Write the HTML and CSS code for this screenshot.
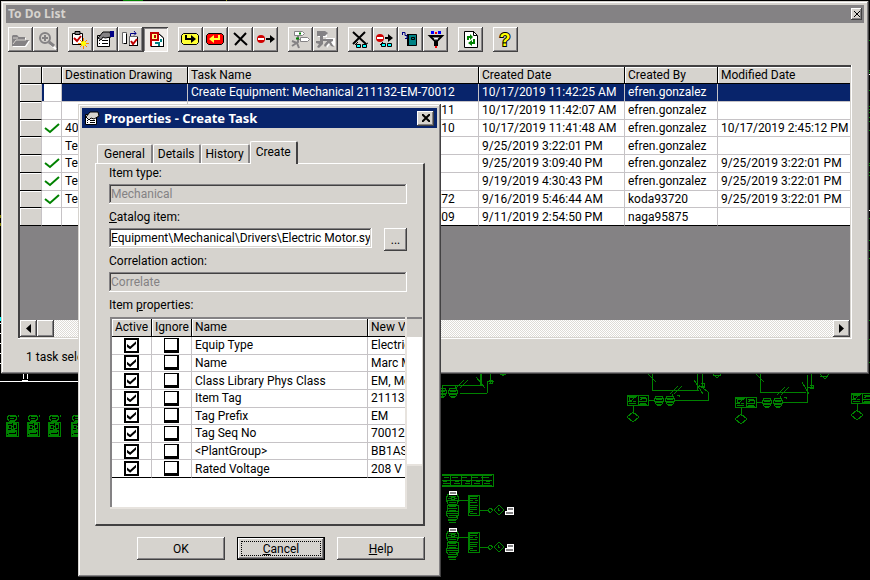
FILE: index.html
```html
<!DOCTYPE html>
<html lang="en">
<head>
<meta charset="utf-8">
<title>To Do List</title>
<link rel="stylesheet" href="styles.css">
</head>
<body>
<main class="desktop">
<svg class="drawing" viewBox="0 0 870 580" aria-hidden="true">
  <defs>
    <g id="pump"><path d="M3 1h6l2 3-2 3H3L1 4zM4 4h4M4 2h5M4 6h5M0 8h12v14H0zM1 9h4M7 9h4M2 11h3v3H2zM7 10h3v4H7zM5 12h2M5 15h4M1 16h10M2 17h8v3H2zM3 18h6M1 21h10M12 3l1-2M5 7v3M1 10v10"/></g>
    <g id="pair"><path d="M0 0h21v10H0zM11 0v10M2 2h7M2 5h3l2-2M6 6h3M2 8h7M13 2h6M13 5l3-2h3M13 8h6M1 6h4M12 6h8M1 1h9M12 9h8M2 3v4M19 3v4M6 10v9M6 17l6 5-6 5-6-5z"/></g>
    <g id="duo"><path d="M2 0h6l2 4-2 4H2L0 4zM2 3h6M2 6h6M1 2h8M1 5h8M3 9h4M13 0h6l2 4-2 4h-6l-2-4zM13 3h6M13 6h6M12 2h8M12 5h8M14 9h4M18-2v3"/></g>
    <g id="branch">
      <path d="M-6 9h4M5 3h9l2 5-2 5H5L3 8zM6 5h7M5 7h3M11 7h3M8 6h3v2H8zM4 9h11M6 11h7M4 14h11v6H4zM6 15h7M5 17h9M6 19h7M4 20l-1 3 2 3h9l2-3-1-3M4 22h11M6 24h7v2H6M5 28h9l1-3M5 29h8M6 31h7M16 9h9M25 4h11v20H25zM26 5h9M27 7h7M27 9h3M32 9h3M27 11h7M26 14h9M27 16h7M27 18h7M27 20h3M27 22h7M26 6v16M36 19h9M47 17l3 2-3 3-2-3zM51 19l5-5 5 5-5 5zM55 17v2h2"/>
      <path class="drawing-note" d="M6 0h7v3H6zM64 16h6v3h-6zM62 20h8v3h-8z"/>
    </g>
  </defs>
  <g class="drawing-lines">
    <path d="M102 1h16M123 0h20M158 1h9M178 1h15M202 1h8M220 1h7M298 1h18M408 1h20"/>
    <use href="#pump" x="6" y="414"/><use href="#pump" x="27" y="414"/><use href="#pump" x="48" y="414"/><use href="#pump" x="71" y="414"/>
    <path d="M442 385h39v-12M480 373v12M487 393V381M460 393h27M442 386v10M456 388l8-8M460 388l8-8M476 377l9 11M488 381h6M490 374v10M489 380h3v3h-3M500 374h6M500 373l3 3 3-3"/>
    <use href="#duo" x="437" y="388"/>
    <use href="#pair" x="627" y="395"/><path d="M648 400h7M674 400h34v-8l-9-7M652 373v17h47M697 373v17M702 373v15M648 374l8 8M670 394l8-8M674 394l8-8M694 380l9 14M699 386h5M701 383h3v4h-3M713 375h8M713 374l4 4 4-4M677 395h2v2"/>
    <use href="#duo" x="654" y="396"/>
    <use href="#pair" x="735" y="397"/><path d="M756 402h7M783 402h24v-27M760 373v19h46M811 373v15M756 374l8 8M777 395l8-8M781 395l8-8M802 382l7 12M808 387h6M810 385h3v3h-3M820 376h8M820 374l5 5 4-5M784 397h2v2"/>
    <use href="#duo" x="762" y="398"/>
    <use href="#pair" x="851" y="393"/>
    <path d="M442 474h51v12h-51M442 480h50M442 475h50M442 485h50M444 477h5M452 477h6M462 477h5M471 477h7M481 477h8M443 483h7M454 483h6M465 483h5M474 483h6M484 483h6M443 481h4M455 481h4M466 481h4M476 481h4M486 481h4M450 475v11M461 475v11M471 475v11M482 475v11"/>
    <use href="#branch" x="443" y="491"/><use href="#branch" x="443" y="528"/>
    <path d="M868 40h2M868 70h2M868 72h2M868 90h2M868 106h2M868 109h2M868 112h2M868 117h2M868 121h2M868 130h2M868 163h2M868 165h2M868 172h2M868 175h2M868 218h2M868 240h2M868 250h2M868 258h2M868 320h2M868 339h2M868 362h2"/>
  </g>
  <path class="drawing-frame" d="M0 381h79M23 373v6M27 373v6M22 380h6M0 323h2M0 333h2M0 343h2M0 353h2M0 363h2M868 74h2M868 210h2"/>
  <path class="drawing-cyan" d="M0 319h2"/><path class="drawing-yellow" d="M0 216h2M0 224h2M226 1h1"/>
  <path class="drawing-red" d="M160 1h34M206 1h7"/>
</svg>

<section class="window todo" aria-label="To Do List">
  <header class="titlebar titlebar-inactive">
    <h1 class="title">To Do List</h1>
    <button class="close close-small" aria-label="Close"><svg viewBox="0 0 8 8"><path d="M1 1l6 6M7 1L1 7"/></svg></button>
  </header>
  <nav class="toolbar" aria-label="Tasks">
    <div class="tool-group">
      <button class="tool" aria-label="Open"><svg viewBox="0 0 25 25"><path fill="#fff" d="M5 9h5l2 2h6v3h4l-4 6H5z"/><path fill="#848284" d="M4 9l1-1h4l2 2h6v3h4l-4 6H4z"/><path stroke="#d6d3ce" fill="none" d="M5 17l3-4h10M5 11h5"/></svg></button>
      <button class="tool" aria-label="Find"><svg viewBox="0 0 25 25" fill="none"><path stroke="#fff" stroke-width="2" d="M17 17l6 5"/><circle cx="12" cy="11" r="5" stroke="#848284" stroke-width="2"/><path stroke="#848284" stroke-width="2" d="M9 11h6M12 8v6"/><path stroke="#848284" stroke-width="3" d="M16 15l5 4"/></svg></button>
    </div>
    <div class="tool-group">
      <button class="tool" aria-label="New task"><svg viewBox="0 0 25 25"><path fill="#fff" stroke="#000" d="M4.500 6.500h10v11h-10z"/><path fill="#848284" stroke="#000" d="M7 4.500h5v3H7z"/><path fill="none" stroke="#c00000" stroke-width="2" d="M6 11l3 3 4-5"/><path stroke="#ff8200" stroke-width="1" d="M15.500 11v11M10 16.500h11M12 13l7 7M19 13l-7 7"/><circle cx="15.500" cy="16.500" r="2.500" fill="#ff0"/></svg></button>
      <button class="tool" aria-label="Properties"><svg viewBox="0 0 25 25"><path fill="#fff" stroke="#000" d="M4.500 8.500h12v11h-12z"/><path fill="#848284" stroke="#000" d="M5 11l5-6h7l1 5-6 1-2-1-2 3z"/><path fill="#000084" d="M17 4h4v6h-4z"/><path stroke="#000" d="M6 13.500h1M9 13.500h6M6 16.500h1M9 16.500h6"/></svg></button>
      <button class="tool" aria-label="Update"><svg viewBox="0 0 25 25"><path fill="#fff" stroke="#666" d="M4.500 5.500h4v11h-4zM11.500 9.500h8v9h-8z"/><path fill="#000" d="M8 7h1v10H6v-1h2zM19 10h1v9h-9v-1h8z"/><path fill="none" stroke="#000084" d="M12.500 9V6.500H18M16 4l2 2.500-2 2"/><path fill="none" stroke="#c00000" stroke-width="2" d="M13 14l2 3 4-5"/></svg></button>
      <button class="tool tool-pressed" aria-label="Show drawing" aria-pressed="true"><svg viewBox="0 0 25 25"><path fill="#fff" stroke="#666" d="M7.500 6.500h8l5 4v9h-13z"/><path fill="#ff8" stroke="#c00000" stroke-width="2" d="M8 6h7v7H8z"/><path fill="#c00000" d="M11 8h2v3h-2zM7 13h2v6H7z"/><path fill="none" stroke="#008284" stroke-width="2" d="M12 16h4v3M18 12v3"/><path stroke="#000" fill="none" d="M16 7l4.500 4V19M8 19.500h13"/></svg></button>
    </div>
    <div class="tool-group">
      <button class="tool" aria-label="Retrieve"><svg viewBox="0 0 25 25"><path fill="#ff3" stroke="#000" d="M5.500 6.500h13l2 2v7l-2 2h-13l-2-2v-7z"/><path fill="none" stroke="#000" stroke-width="2" d="M8 8v4h7"/><path d="M13 8l5 4-5 4z"/></svg></button>
      <button class="tool" aria-label="Return"><svg viewBox="0 0 25 25"><path fill="#f00" stroke="#000" d="M5.500 6.500h13l2 2v7l-2 2h-13l-2-2v-7z"/><path fill="none" stroke="#ff3" stroke-width="2" d="M16 8v4H9"/><path fill="#ff3" d="M11 8l-5 4 5 4z"/></svg></button>
      <button class="tool" aria-label="Delete"><svg viewBox="0 0 25 25"><path stroke="#000" stroke-width="2" d="M6 6l13 12M18 6L7 18"/></svg></button>
      <button class="tool" aria-label="Defer"><svg viewBox="0 0 25 25"><circle cx="8" cy="12" r="4" fill="#d00000"/><path stroke="#fff" stroke-width="2" d="M5 12h6"/><path stroke="#000" stroke-width="2" d="M13 12h6"/><path d="M17 8l5 4-5 4z"/></svg></button>
    </div>
    <div class="tool-group">
      <button class="tool" aria-label="Show path"><svg viewBox="0 0 25 25" fill="none"><path fill="#fff" stroke="#848284" d="M6.500 4.500h8l2 2-2 2h-8zM12.500 10.500h7l2 2-2 2h-7z"/><path stroke="#848284" stroke-width="2" d="M10 9v6l-6 4M4 14l5 2 2 5"/><path stroke="#848284" d="M10 12.500h3"/><path stroke="#008200" stroke-width="2" d="M11 6.500h2M8 11.500h3"/></svg></button>
      <button class="tool" aria-label="Remove path"><svg viewBox="0 0 25 25"><path fill="#fff" d="M5 5h9v5H5zM13 11h9v8l-5-2-3 4z"/><path fill="#848284" d="M4 4h8l3 2-3 3h-2v3h10v2l-2 1 3 5-3-1-2-3-4 4-1-2 3-4h-4v3l-4 4-2-1 2-3-3-1v-2h4V9H4z"/></svg></button>
    </div>
    <div class="tool-group">
      <button class="tool" aria-label="Preview delete"><svg viewBox="0 0 25 25"><path stroke="#000" stroke-width="2" d="M5 5l13 12M17 5L5 17"/><path fill="#0ff" stroke="#000" d="M8.500 17.500h4v3h-4zM14.500 17.500h4v3h-4z"/><path stroke="#000" d="M7 18l3-3M18 17l2-1"/></svg></button>
      <button class="tool" aria-label="Preview defer"><svg viewBox="0 0 25 25"><circle cx="7" cy="11" r="4" fill="#d00000"/><path stroke="#fff" stroke-width="2" d="M4 11h6"/><path stroke="#000" stroke-width="2" d="M12 11h5"/><path d="M15 7l5 4-5 4z"/><path fill="#0ff" stroke="#000" d="M8.500 16.500h4v3h-4zM14.500 16.500h4v3h-4z"/><path stroke="#000" d="M7 18l3-3"/></svg></button>
      <button class="tool" aria-label="Log"><svg viewBox="0 0 25 25"><path fill="#008284" stroke="#000" d="M9.500 7.500h9v11h-9z"/><path fill="#000" d="M9 7h2v12H9z"/><path fill="none" stroke="#000" d="M13.500 10.500h3v2h-3z"/><path fill="none" stroke="#000084" d="M4 5.500h3v3h2v3H7M4.500 5v3"/></svg></button>
      <button class="tool" aria-label="Filter"><svg viewBox="0 0 25 25"><path fill="#fff" stroke="#000" stroke-width="2" d="M7 9h12l-5 5v4h-2v-4z"/><path stroke="#848284" d="M10 10.500h6M11 12.500h4"/><path fill="#00f" d="M8 4h3v3H8zM15 4h3v3h-3z"/><path fill="#f00" d="M12 5h2v2h-2zM12 19h2v2h-2z"/></svg></button>
    </div>
    <div class="tool-group">
      <button class="tool" aria-label="Refresh"><svg viewBox="0 0 25 25"><path fill="#fff" stroke="#000" d="M6.500 4.500h9l4 4v12h-13z"/><path fill="none" stroke="#000" d="M15.500 4v4.500H19"/><path fill="none" stroke="#008200" stroke-width="2" d="M10 13v-3h3M16 12v4h-3"/><path fill="#008200" d="M12 7l3 3-3 3zM14 13l-4 3 4 3z"/></svg></button>
    </div>
    <div class="tool-group">
      <button class="tool" aria-label="Help"><svg viewBox="0 0 25 25"><text class="help-mark" x="12" y="19" text-anchor="middle">?</text></svg></button>
    </div>
  </nav>

  <div class="task-view">
    <table class="tasks">
      <colgroup><col class="c-row"><col class="c-state"><col class="c-dest"><col class="c-name"><col class="c-created"><col class="c-by"><col></colgroup>
      <thead><tr><th></th><th></th><th>Destination Drawing</th><th>Task Name</th><th>Created Date</th><th>Created By</th><th>Modified Date</th></tr></thead>
      <tbody>
        <tr class="selected"><th></th><td class="state"></td><td></td><td>Create Equipment: Mechanical 211132-EM-70012</td><td>10/17/2019 11:42:25 AM</td><td>efren.gonzalez</td><td></td></tr>
        <tr><th></th><td></td><td></td><td>Create Equipment: Mechanical 211132-EM-70011</td><td>10/17/2019 11:42:07 AM</td><td>efren.gonzalez</td><td></td></tr>
        <tr><th></th><td class="state"><svg viewBox="0 0 16 12"><path d="M1 6l5 4 9-8"/></svg></td><td>40</td><td>Create Equipment: Mechanical 211132-EM-70010</td><td>10/17/2019 11:41:48 AM</td><td>efren.gonzalez</td><td>10/17/2019 2:45:12 PM</td></tr>
        <tr><th></th><td></td><td>Te</td><td></td><td>9/25/2019 3:22:01 PM</td><td>efren.gonzalez</td><td></td></tr>
        <tr><th></th><td class="state"><svg viewBox="0 0 16 12"><path d="M1 6l5 4 9-8"/></svg></td><td>Te</td><td></td><td>9/25/2019 3:09:40 PM</td><td>efren.gonzalez</td><td>9/25/2019 3:22:01 PM</td></tr>
        <tr><th></th><td class="state"><svg viewBox="0 0 16 12"><path d="M1 6l5 4 9-8"/></svg></td><td>Te</td><td></td><td>9/19/2019 4:30:43 PM</td><td>efren.gonzalez</td><td>9/25/2019 3:22:01 PM</td></tr>
        <tr><th></th><td class="state"><svg viewBox="0 0 16 12"><path d="M1 6l5 4 9-8"/></svg></td><td>Te</td><td>Create Equipment: Mechanical 211132-EM-70072</td><td>9/16/2019 5:46:44 AM</td><td>koda93720</td><td>9/25/2019 3:22:01 PM</td></tr>
        <tr><th></th><td></td><td></td><td>Create Equipment: Mechanical 211132-EM-70009</td><td>9/11/2019 2:54:50 PM</td><td>naga95875</td><td></td></tr>
      </tbody>
    </table>
    <div class="scrollbar">
      <button class="scroll-arrow" aria-label="Scroll left"><svg viewBox="0 0 5 9"><path d="M5 0v9L0 4.500z"/></svg></button>
      <span class="scroll-thumb"></span>
      <button class="scroll-arrow scroll-end" aria-label="Scroll right"><svg viewBox="0 0 5 9"><path d="M0 0v9l5-4.500z"/></svg></button>
    </div>
  </div>
  <p class="status">1 task selected</p>
</section>

<section class="window dialog" role="dialog" aria-label="Properties - Create Task">
  <header class="titlebar">
    <svg class="title-icon" viewBox="0 0 16 16" aria-hidden="true"><path fill="#fff" stroke="#000" d="M1.500 4.500h11v10h-11z"/><path fill="#d6d3ce" stroke="#000" d="M2 7l4-5h8l1 4-5 3-3-1-2 2z"/><path stroke="#000" d="M3 10.500h1M6 10.500h5M3 12.500h1M6 12.500h5"/></svg>
    <h2 class="title">Properties - Create Task</h2>
    <button class="close" aria-label="Close"><svg viewBox="0 0 8 8"><path d="M0 0l8 8M8 0L0 8"/></svg></button>
  </header>
  <div class="tabs" role="tablist">
    <button class="tab" role="tab">General</button>
    <button class="tab" role="tab">Details</button>
    <button class="tab" role="tab">History</button>
    <button class="tab tab-active" role="tab" aria-selected="true">Create</button>
  </div>
  <form class="panel">
    <div class="field">
      <label for="item-type">Item type:</label>
      <input id="item-type" class="box" type="text" value="Mechanical" disabled>
    </div>
    <div class="field">
      <label for="catalog"><u>C</u>atalog item:</label>
      <div class="browse-row">
        <input id="catalog" class="box" type="text" value="Equipment\Mechanical\Drivers\Electric Motor.sym">
        <button class="button browse" type="button">...</button>
      </div>
    </div>
    <div class="field">
      <label for="correlation">Correlation action:</label>
      <input id="correlation" class="box" type="text" value="Correlate" disabled>
    </div>
    <div class="field"><span class="caption" id="props-label">Item <u>p</u>roperties:</span></div>
    <div class="props-row">
      <div class="props-view">
        <table class="props" aria-labelledby="props-label">
          <colgroup><col class="c-check"><col class="c-check"><col class="c-prop"><col></colgroup>
          <thead><tr><th>Active</th><th>Ignore</th><th>Name</th><th>New Value</th></tr></thead>
          <tbody>
            <tr><td><input type="checkbox" aria-label="Active, Equip Type" checked></td><td><input class="ignore" type="checkbox" aria-label="Ignore, Equip Type"></td><td>Equip Type</td><td>Electric Motor</td></tr>
            <tr><td><input type="checkbox" aria-label="Active, Name" checked></td><td><input class="ignore" type="checkbox" aria-label="Ignore, Name"></td><td>Name</td><td>Marc Motor</td></tr>
            <tr><td><input type="checkbox" aria-label="Active, Class Library Phys Class" checked></td><td><input class="ignore" type="checkbox" aria-label="Ignore, Class Library Phys Class"></td><td>Class Library Phys Class</td><td>EM, Motor</td></tr>
            <tr><td><input type="checkbox" aria-label="Active, Item Tag" checked></td><td><input class="ignore" type="checkbox" aria-label="Ignore, Item Tag"></td><td>Item Tag</td><td>211132-EM-70012</td></tr>
            <tr><td><input type="checkbox" aria-label="Active, Tag Prefix" checked></td><td><input class="ignore" type="checkbox" aria-label="Ignore, Tag Prefix"></td><td>Tag Prefix</td><td>EM</td></tr>
            <tr><td><input type="checkbox" aria-label="Active, Tag Seq No" checked></td><td><input class="ignore" type="checkbox" aria-label="Ignore, Tag Seq No"></td><td>Tag Seq No</td><td>70012</td></tr>
            <tr><td><input type="checkbox" aria-label="Active, PlantGroup" checked></td><td><input class="ignore" type="checkbox" aria-label="Ignore, PlantGroup"></td><td>&lt;PlantGroup&gt;</td><td>BB1AS</td></tr>
            <tr><td><input type="checkbox" aria-label="Active, Rated Voltage" checked></td><td><input class="ignore" type="checkbox" aria-label="Ignore, Rated Voltage"></td><td>Rated Voltage</td><td>208 V</td></tr>
          </tbody>
        </table>
      </div>
      <div class="props-edge"></div>
    </div>
  </form>
  <footer class="actions">
    <button class="button">OK</button>
    <button class="button button-default"><u>C</u>ancel</button>
    <button class="button"><u>H</u>elp</button>
  </footer>
</section>
</main>
</body>
</html>
```
FILE: styles.css
```css
:root {
  --face: #d6d3ce;
  --light: #fff;
  --shade: #848284;
  --dark: #424142;
  --navy: #08246b;
  --grid: #c6c3c6;
}

* { box-sizing: border-box; }

body {
  margin: 0;
  background: #000;
  color: #000;
  font: 12px/16px Roboto, "Liberation Sans", sans-serif;
}

button, input { font: inherit; color: inherit; margin: 0; }
h1, h2, p { margin: 0; }
button { padding: 0; border: 0; background: var(--face); }

.desktop { position: relative; min-height: 100vh; overflow: hidden; }

/* Plant drawing behind the windows */
.drawing { position: absolute; left: 0; top: 0; width: 870px; shape-rendering: crispEdges; }
.drawing path { fill: none; }
.drawing-lines { stroke: #008200; }
.drawing .drawing-note { stroke: #fff; fill: #848284; }
.drawing-frame { stroke: #fff; }
.drawing-cyan { stroke: #0ff; stroke-width: 4; }
.drawing-yellow { stroke: #848200; stroke-width: 3; }
.drawing-red { stroke: #a00000; }

/* Windows */
.window {
  position: absolute;
  background: var(--face);
  box-shadow: inset -1px -1px var(--dark), inset 1px 1px var(--face), inset -2px -2px var(--shade), inset 2px 2px var(--light);
}
.todo { left: 1px; right: 1px; top: 1px; padding: 4px 5px; }
.dialog { left: 78px; top: 104px; width: 363px; padding: 4px; }

.titlebar {
  display: flex;
  align-items: center;
  gap: 4px;
  height: 20px;
  padding: 0 3px 0 2px;
  background: var(--navy);
  color: #fff;
}
.titlebar-inactive { height: 18px; padding: 0 2px; background: var(--shade); color: var(--face); }
.title { flex: 1; font: bold 13px/16px "Noto Sans", "Open Sans", sans-serif; }
.titlebar-inactive .title { font-size: 12px; }
.title-icon { width: 16px; height: 16px; }
.close {
  display: flex;
  align-items: center;
  justify-content: center;
  width: 17px;
  height: 15px;
  box-shadow: inset -1px -1px var(--dark), inset 1px 1px var(--light), inset -2px -2px var(--shade);
}
.close svg { width: 8px; height: 8px; stroke: #000; stroke-width: 2; }
.close-small { width: 11px; height: 12px; }
.close-small svg { stroke-width: 1; }

/* Toolbar */
.toolbar { display: flex; gap: 10px; padding: 4px 2px 0; }
.tool-group { display: flex; }
.tool {
  width: 25px;
  height: 25px;
  box-shadow: inset -1px -1px var(--dark), inset 1px 1px var(--light), inset -2px -2px var(--shade);
}
.tool svg { display: block; width: 25px; height: 25px; }
.tool-pressed { background: #efebe7; box-shadow: inset 1px 1px var(--dark), inset -1px -1px var(--light), inset 2px 2px var(--shade); }
.help-mark { font: bold 18px "Liberation Sans", sans-serif; fill: #ff0; stroke: #000; stroke-width: 2px; paint-order: stroke; }

/* Task table */
.task-view {
  display: flex;
  flex-direction: column;
  height: 274px;
  margin: 13px 12px 0;
  padding: 2px;
  background: var(--shade);
  box-shadow: inset -1px -1px var(--light), inset 2px 2px var(--dark), inset -2px -2px var(--face);
}
table { border-spacing: 0; table-layout: fixed; width: 100%; }
th, td { padding: 0 0 0 3px; text-align: left; font-weight: normal; line-height: 16px; white-space: nowrap; overflow: hidden; }
td { background: #fff; border-right: 1px solid var(--grid); border-bottom: 1px solid var(--grid); }
th { background: var(--face); border-right: 1px solid #000; border-bottom: 1px solid #000; box-shadow: inset 1px 1px var(--light); }
td:last-child, thead th:last-child { border-right: 0; }
tbody tr:last-child > * { border-bottom-color: #000; }
.tasks { height: 159px; }
.tasks tbody th { border-right-color: var(--grid); }
.c-row { width: 22px; }
.c-state { width: 20px; }
.c-dest { width: 126px; }
.c-name { width: 291px; }
.c-created { width: 146px; }
.c-by { width: 93px; }
.selected td { background: var(--navy); color: #fff; }
td.state { padding-left: 2px; }
.selected td.state { background: #fff; box-shadow: inset 2px 0 var(--navy); }
.state svg { display: block; width: 16px; height: 12px; fill: none; stroke: #008200; stroke-width: 2; }

.scrollbar {
  display: flex;
  height: 17px;
  margin-top: auto;
  background: repeating-conic-gradient(#fff 0 25%, #dedbd6 0 50%) 0 0 / 2px 2px;
}
.scroll-arrow, .scroll-thumb {
  display: flex;
  align-items: center;
  justify-content: center;
  width: 17px;
  background: var(--face);
  box-shadow: inset -1px -1px var(--dark), inset 1px 1px var(--light), inset -2px -2px var(--shade);
}
.scroll-arrow svg { width: 5px; height: 9px; }
.scroll-end { margin-left: auto; }
.status { padding: 10px 20px 5px; }

/* Tabs */
.tabs { display: flex; align-items: flex-end; height: 35px; padding-left: 15px; }
.tab {
  height: 19px;
  padding: 0 6px;
  border: solid;
  border-width: 1px 2px 0 1px;
  border-color: var(--light) var(--shade) var(--shade) var(--light);
  border-radius: 2px 2px 0 0;
}
.tab + .tab { padding: 0 4px; }
.tab + .tab-active {
  position: relative;
  z-index: 1;
  height: 23px;
  margin-bottom: -1px;
  padding: 0 5px 2px;
  border-right-color: var(--dark);
}

/* Property page */
.panel {
  margin: 0 12px 0 13px;
  padding-bottom: 15px;
  border: solid;
  border-width: 1px 2px 2px 1px;
  border-color: var(--light) var(--dark) var(--dark) var(--light);
}
.field { margin: 0 16px 4px 13px; }
.field label, .caption { display: block; line-height: 18px; margin-bottom: 2px; }
.box {
  display: block;
  width: 100%;
  height: 20px;
  padding: 0 2px;
  border: 0;
  background: #fff;
  box-shadow: inset -1px -1px var(--light), inset 1px 1px var(--shade), inset -2px -2px var(--face), inset 2px 2px var(--dark);
}
.box:disabled { background: var(--face); color: var(--shade); }
.browse-row { display: flex; gap: 12px; height: 20px; }
.browse-row .box { flex: 1; min-width: 0; }

.button {
  width: 88px;
  height: 23px;
  box-shadow: inset -1px -1px var(--dark), inset 1px 1px var(--light), inset -2px -2px var(--shade);
}
.button.browse { width: 23px; }
.button-default {
  outline: 1px dotted #000;
  outline-offset: -5px;
  box-shadow: inset 0 0 0 1px #000, inset -2px -2px var(--dark), inset 2px 2px var(--light), inset -3px -3px var(--shade);
}

.props-row { display: flex; align-items: flex-start; margin: -1px 1px 0 14px; }
.props-view {
  flex: 1;
  height: 192px;
  padding: 2px;
  overflow: hidden;
  background: #fff;
  box-shadow: inset -2px -2px #e7e3de, inset 2px 2px var(--shade);
}
.props { height: 159px; }
.props th { line-height: 17px; }
.c-check { width: 40px; }
.c-prop { width: 176px; }
.props-edge {
  width: 15px;
  height: 149px;
  border-top: 2px solid var(--shade);
  border-bottom: 2px solid #e7e3de;
  background: linear-gradient(var(--face) 18px, #fff 18px);
}
.props input {
  display: grid;
  place-items: center;
  appearance: none;
  width: 15px;
  height: 15px;
  margin: 0 0 0 9px;
  border: 2px solid #000;
  background: #fff;
}
.props .ignore { border-width: 1px 2px 3px 1px; }
.props input:checked::before {
  content: "";
  width: 9px;
  height: 8px;
  background: #000;
  clip-path: polygon(0 35%, 35% 65%, 100% 0, 100% 35%, 35% 100%, 0 70%);
}

.actions { display: flex; justify-content: flex-end; gap: 12px; padding: 11px 12px 13px; }
```
